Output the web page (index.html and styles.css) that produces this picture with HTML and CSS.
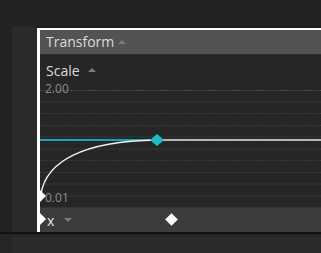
FILE: index.html
```html
<!DOCTYPE html>
<html lang="en">
<head>
  <meta charset="UTF-8" />
  <title>Curve Editor</title>
  <link rel="stylesheet" href="styles.css">
</head>
<body>
  <div class="top"></div>

  <div class="work">
    <div class="gutter"></div>
    <div class="side"></div>
    <div class="panel">
      <div class="head">Transform <span class="up"></span></div>
      <div class="prop">Scale <span class="up"></span></div>
      <div class="graph">
        <svg width="281" height="127" viewBox="0 0 281 127">
          <g class="grid">
            <line class="max" x1="0" y1="10.5" x2="281" y2="10.5" />
            <line x1="0" y1="22" x2="281" y2="22" />
            <line x1="0" y1="33.5" x2="281" y2="33.5" />
            <line x1="0" y1="45.5" x2="281" y2="45.5" />
            <line x1="0" y1="57" x2="281" y2="57" />
            <line x1="0" y1="69" x2="281" y2="69" />
            <line x1="0" y1="80.5" x2="281" y2="80.5" />
            <line x1="0" y1="92.5" x2="281" y2="92.5" />
            <line x1="0" y1="104" x2="281" y2="104" />
            <line x1="0" y1="116" x2="281" y2="116" />
          </g>
          <line x1="0" y1="60" x2="117" y2="60" stroke="#1aa3b1" stroke-width="2" />
          <line x1="117" y1="60" x2="281" y2="60" stroke="#b4b4b4" stroke-width="2" />
          <path d="M1 114 C6 82 42 61 117 60" fill="none" stroke="#f0f0f0" stroke-width="1.4" />
          <path d="M117 54 L124 60 L117 66 L110 60 Z" fill="#1fbccb" />
          <path d="M0 110 L6 116 L0 122 Z" fill="#fff" />
        </svg>
        <span class="lbl hi">2.00</span>
        <span class="lbl lo">0.01</span>
      </div>
      <div class="axis">x <span class="down"></span><span class="key"></span></div>
    </div>
  </div>

  <div class="bottom"><div class="tray"></div></div>
</body>
</html>
```

FILE: styles.css
```css
* { margin: 0; padding: 0; box-sizing: border-box; }
body {
  width: 321px;
  height: 253px;
  overflow: hidden;
  background: #232323;
  font-family: "Open Sans", "Noto Sans", sans-serif;
  display: flex;
  flex-direction: column;
}
.top { height: 26px; background: #232323; }
.work {
  height: 206px;
  display: flex;
  background: #1d1d1d;
}
.gutter { width: 12px; background: #222; }
.side { width: 25px; background: #2a2a2a; }
.panel {
  flex: 1;
  margin-top: 2px;
  display: flex;
  flex-direction: column;
  background: #262626;
  border-top: 2px solid #fff;
  border-left: 3px solid #fff;
}
.head {
  height: 24px;
  background: #535353;
  border-bottom: 1px solid #303030;
  box-sizing: content-box;
  color: #dcdcdc;
  font-size: 14px;
  line-height: 24px;
  padding-left: 6px;
  display: flex;
  align-items: center;
  gap: 4px;
}
.prop {
  height: 25px;
  color: #dcdcdc;
  font-size: 14px;
  padding: 5px 0 0 6px;
  display: flex;
  align-items: center;
  gap: 8px;
}
.up, .down {
  width: 0;
  height: 0;
  border-left: 4px solid transparent;
  border-right: 4px solid transparent;
}
.up { border-bottom: 4px solid #7c7c7c; }
.down { border-top: 4px solid #7c7c7c; }
.graph { position: relative; height: 127px; }
.graph svg { display: block; }
.grid line { stroke: #3a3a3a; stroke-width: 1; stroke-dasharray: 2 1; }
.grid .max { stroke: #4a4a4a; }
.lbl {
  position: absolute;
  left: 5px;
  color: #8c8c8c;
  font-size: 12px;
  line-height: 14px;
}
.lbl.hi { top: 2px; }
.lbl.lo { top: 111px; }
.axis {
  position: relative;
  height: 25px;
  background: #3c3c3c;
  border-top: 1px solid #333;
  color: #e6e6e6;
  font-size: 14px;
  padding-left: 7px;
  display: flex;
  align-items: center;
  gap: 10px;
}
.axis::before {
  content: "";
  position: absolute;
  left: 0;
  top: 5px;
  width: 0;
  height: 0;
  border-top: 6px solid transparent;
  border-bottom: 6px solid transparent;
  border-left: 6px solid #fff;
}
.key {
  position: absolute;
  left: 127px;
  top: 7px;
  width: 9px;
  height: 9px;
  background: #fff;
  transform: rotate(45deg);
}
.bottom {
  flex: 1;
  border-top: 2px solid #121212;
  background: #262626;
  padding: 3px 0 0 12px;
}
.tray { height: 100%; background: #2b2b2b; border-radius: 3px 0 0 0; }
```
